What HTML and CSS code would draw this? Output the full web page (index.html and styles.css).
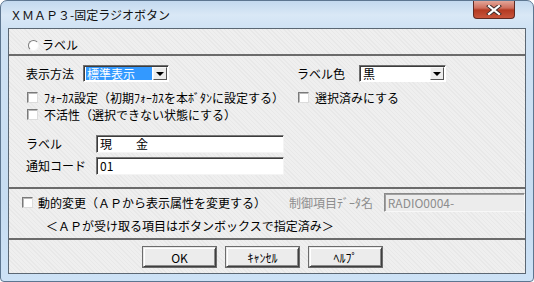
FILE: index.html
```html
<!DOCTYPE html>
<html lang="ja">
  <head>
    <meta charset="UTF-8" />
    <title>XMAP3-固定ラジオボタン</title>
    <link rel="stylesheet" href="styles.css">
  </head>
  <body>
    <div class="window">
      <div class="titlebar">
        <span class="title">ＸＭＡＰ３-固定ラジオボタン</span>
        <span class="close">
          <svg width="16" height="10" viewBox="0 0 16 10">
            <path d="M3 1 L13 9 M13 1 L3 9" stroke="#3a2a2a" stroke-width="4" stroke-linecap="square" />
            <path d="M3 1 L13 9 M13 1 L3 9" stroke="#ffffff" stroke-width="2.2" stroke-linecap="square" />
          </svg>
        </span>
      </div>

      <div class="client">
        <div class="sec sec-top">
          <label class="opt opt-radio"><span class="radio"></span>ラベル</label>
        </div>
        <div class="rule"></div>

        <div class="sec sec-main">
          <div class="row row-select">
            <div class="col col-left">
              <span class="lbl lbl-method">表示方法</span>
              <div class="select sel-method">
                <span class="val hl">標準表示</span>
                <span class="drop"><i></i></span>
              </div>
            </div>
            <div class="col">
              <span class="lbl lbl-color">ラベル色</span>
              <div class="select sel-color">
                <span class="val">黒</span>
                <span class="drop"><i></i></span>
              </div>
            </div>
          </div>

          <div class="row row-check">
            <div class="col col-left">
              <label class="opt"><span class="check"></span>ﾌｫｰｶｽ設定（初期ﾌｫｰｶｽを本ﾎﾞﾀﾝに設定する）</label>
            </div>
            <div class="col">
              <label class="opt"><span class="check"></span>選択済みにする</label>
            </div>
          </div>
          <div class="row row-check">
            <label class="opt"><span class="check"></span>不活性（選択できない状態にする）</label>
          </div>

          <div class="row row-input first">
            <span class="lbl lbl-input">ラベル</span>
            <div class="textbox">現　　金</div>
          </div>
          <div class="row row-input">
            <span class="lbl lbl-input">通知コード</span>
            <div class="textbox">01</div>
          </div>
        </div>
        <div class="rule"></div>

        <div class="sec sec-dyn">
          <div class="row row-dyn">
            <label class="opt opt-dyn"><span class="check"></span>動的変更（ＡＰから表示属性を変更する）</label>
            <span class="lbl lbl-disabled">制御項目ﾃﾞｰﾀ名</span>
            <div class="textbox disabled">RADIO0004-</div>
          </div>
          <p class="note">＜ＡＰが受け取る項目はボタンボックスで指定済み＞</p>
        </div>
        <div class="rule"></div>

        <div class="sec sec-buttons">
          <button class="btn">OK</button>
          <button class="btn">ｷｬﾝｾﾙ</button>
          <button class="btn">ﾍﾙﾌﾟ</button>
        </div>
      </div>
    </div>
  </body>
</html>
```

FILE: styles.css
```css
body {
  margin: 0;
  font-family: "Noto Sans CJK JP", "DejaVu Sans", sans-serif;
  font-size: 12px;
  color: #000;
  background: #ffffff;
}

.window {
  width: 534px;
  height: 282px;
  box-sizing: border-box;
  padding: 0 7px 7px;
  border: 1px solid #5d7690;
  border-radius: 7px 7px 4px 4px;
  background: linear-gradient(
    to bottom,
    #c3d9ef 0px,
    #d9e8f6 14px,
    #cfe2f4 28px,
    #c6dcf1 200px,
    #cde2f6 282px
  );
  display: flex;
  flex-direction: column;
}

/* title bar */
.titlebar {
  height: 27px;
  display: flex;
  justify-content: space-between;
  align-items: flex-start;
}

.title {
  padding: 7px 0 0 2px;
  line-height: 14px;
  color: #111;
}

.close {
  width: 42px;
  height: 18px;
  margin-right: 11px;
  box-sizing: border-box;
  border: 1px solid #5e2a23;
  border-top: none;
  border-radius: 0 0 4px 4px;
  background: linear-gradient(to bottom, #e3a699 0px, #cf6e5c 7px, #b33a22 9px, #c8553c 17px);
  display: flex;
  align-items: center;
  justify-content: center;
}

/* client area */
.client {
  flex: 1;
  border: 1px solid #5b6773;
  background-color: #efefef;
  background-image: repeating-linear-gradient(
    45deg,
    #e8e8e8 0px,
    #e8e8e8 1px,
    transparent 1px,
    transparent 3px
  );
  display: flex;
  flex-direction: column;
}

.rule {
  height: 2px;
  background: #6b6b6b;
  flex-shrink: 0;
}

.sec-top {
  height: 25px;
  box-sizing: border-box;
  padding: 9px 0 0 19px;
}

.sec-main {
  height: 131px;
  box-sizing: border-box;
  padding: 9px 0 0 17px;
}

.sec-dyn {
  height: 49px;
  box-sizing: border-box;
  padding: 4px 0 0 12px;
}

.sec-buttons {
  flex: 1;
  display: flex;
  gap: 10px;
  padding: 7px 0 0 134px;
}

/* rows */
.row {
  display: flex;
  align-items: center;
}

.col {
  display: flex;
  align-items: center;
}

.col-left {
  width: 271px;
}

.row-check {
  height: 17px;
}

.row-select + .row-check {
  margin-top: 7px;
}

.row-input {
  height: 18px;
  margin-top: 4px;
}

.row-input.first {
  margin-top: 12px;
}

.lbl {
  line-height: 14px;
  white-space: nowrap;
}

.lbl-method {
  width: 57px;
}

.lbl-color {
  width: 62px;
}

.lbl-input {
  width: 70px;
}

.lbl-disabled {
  margin-left: 23px;
  width: 96px;
  color: #8d8d8d;
}

/* options */
.opt {
  display: flex;
  align-items: center;
  line-height: 14px;
  white-space: nowrap;
}

.check {
  width: 11px;
  height: 11px;
  box-sizing: border-box;
  margin: 0 6px 0 1px;
  background: #fff;
  border: 1px solid;
  border-color: #7a7a7a #dcdcdc #dcdcdc #7a7a7a;
  box-shadow: inset 1px 1px 0 #b8b8b8;
}

.radio {
  width: 11px;
  height: 11px;
  box-sizing: border-box;
  margin-right: 3px;
  border-radius: 50%;
  background: #fff;
  border: 1px solid;
  border-color: #7a7a7a #f4f4f4 #f4f4f4 #7a7a7a;
}

.opt-dyn .check {
  margin-right: 5px;
}

/* selects */
.select {
  height: 17px;
  box-sizing: border-box;
  border: 1px solid;
  border-color: #6f6f6f #ffffff #ffffff #6f6f6f;
  box-shadow: inset 1px 1px 0 #3c3c3c;
  background: #fff;
  display: flex;
  align-items: stretch;
  padding: 1px 1px 1px 2px;
}

.sel-method {
  width: 86px;
}

.sel-color {
  width: 87px;
}

.select .val {
  flex: 1;
  line-height: 14px;
  padding-left: 1px;
}

.select .val.hl {
  background: #3399ff;
  color: #fff;
  margin-right: 1px;
}

.drop {
  width: 14px;
  box-sizing: border-box;
  background: #ececec;
  border: 1px solid;
  border-color: #f8f8f8 #555 #555 #f8f8f8;
  display: flex;
  align-items: center;
  justify-content: center;
}

.drop i {
  width: 0;
  height: 0;
  border-left: 4px solid transparent;
  border-right: 4px solid transparent;
  border-top: 4px solid #000;
}

/* text boxes */
.textbox {
  width: 188px;
  height: 18px;
  box-sizing: border-box;
  background: #fff;
  border: 1px solid;
  border-color: #777 #f4f4f4 #f4f4f4 #777;
  box-shadow: inset 1px 1px 0 #3c3c3c;
  line-height: 14px;
  padding: 1px 0 0 3px;
}

.textbox.disabled {
  width: 143px;
  height: 19px;
  color: #8d8d8d;
  background: #ececec;
  border-color: #8a8a8a #f8f8f8 #f8f8f8 #8a8a8a;
  box-shadow: inset 1px 1px 0 #a0a0a0;
  padding-top: 2px;
}

.note {
  margin: 7px 0 0 25px;
  line-height: 14px;
}

/* buttons */
.btn {
  width: 73px;
  height: 20px;
  padding: 0;
  font-family: "Noto Sans CJK JP", "DejaVu Sans", sans-serif;
  font-size: 12px;
  color: #000;
  background: #ececec;
  border: 1px solid;
  border-color: #e8e8e8 #3f3f3f #3f3f3f #e8e8e8;
  box-shadow: inset 1px 1px 0 #ffffff, inset -1px -1px 0 #8a8a8a, 0 0 0 1px #6c6c6c;
}
```
